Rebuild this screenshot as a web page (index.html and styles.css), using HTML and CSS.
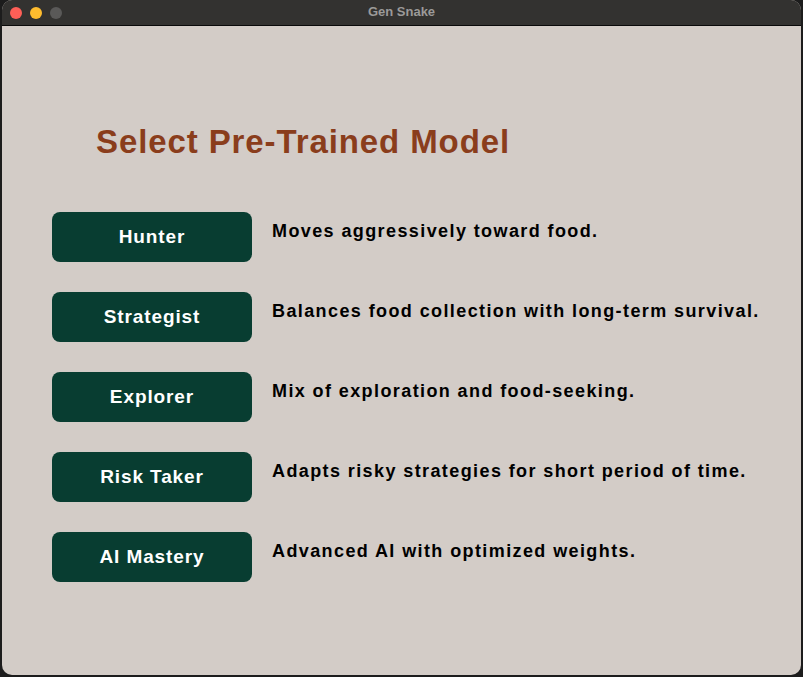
FILE: index.html
```html
<!DOCTYPE html>
<html>
<head>
<meta charset="utf-8">
<link rel="stylesheet" href="styles.css">
</head>
<body>
<div class="window">
  <div class="titlebar">
    <div class="lights">
      <span class="light red"></span>
      <span class="light yellow"></span>
      <span class="light gray"></span>
    </div>
    <div class="wtitle">Gen Snake</div>
  </div>
  <div class="content">
    <h1 class="heading">Select Pre-Trained Model</h1>
    <div class="models">
      <div class="row"><div class="btn">Hunter</div><div class="desc">Moves aggressively toward food.</div></div>
      <div class="row"><div class="btn">Strategist</div><div class="desc">Balances food collection with long-term survival.</div></div>
      <div class="row"><div class="btn">Explorer</div><div class="desc">Mix of exploration and food-seeking.</div></div>
      <div class="row"><div class="btn">Risk Taker</div><div class="desc">Adapts risky strategies for short period of time.</div></div>
      <div class="row"><div class="btn">AI Mastery</div><div class="desc">Advanced AI with optimized weights.</div></div>
    </div>
  </div>
</div>
</body>
</html>
```
FILE: styles.css
```css
html, body {
  margin: 0;
  padding: 0;
  background: #1c1c1c;
  width: 803px;
  height: 677px;
  overflow: hidden;
  font-family: "Liberation Sans", Arial, sans-serif;
}
.window {
  margin-left: 2px;
  width: 799px;
  height: 675px;
  border-radius: 10px;
  overflow: hidden;
  background: #d3ccc7;
  display: flex;
  flex-direction: column;
}
.titlebar {
  height: 25px;
  background: #333230;
  border-bottom: 1px solid #0a0a0a;
  position: relative;
  display: flex;
  align-items: center;
  flex-shrink: 0;
}
.lights {
  display: flex;
  gap: 8px;
  padding-left: 8px;
}
.light {
  width: 12px;
  height: 12px;
  border-radius: 50%;
  display: block;
}
.red { background: #fe5f57; }
.yellow { background: #febc2e; }
.gray { background: #5a5958; }
.wtitle {
  position: absolute;
  left: 0;
  right: 0;
  top: 0;
  line-height: 23px;
  text-align: center;
  color: #9b9a99;
  font-size: 13px;
  font-weight: bold;
}
.content {
  flex: 1;
  padding: 0 0 0 50px;
}
.heading {
  margin: 96px 0 0 44px;
  font-size: 33px;
  line-height: 40px;
  font-weight: bold;
  color: #8a3d1c;
  letter-spacing: 0.9px;
}
.models {
  margin-top: 50px;
  display: flex;
  flex-direction: column;
  gap: 30px;
}
.row {
  display: flex;
  align-items: flex-start;
}
.btn {
  width: 200px;
  height: 50px;
  border-radius: 8px;
  background: #083d31;
  color: #ffffff;
  font-weight: bold;
  font-size: 19px;
  letter-spacing: 0.9px;
  display: flex;
  align-items: center;
  justify-content: center;
  flex-shrink: 0;
}
.desc {
  margin-left: 20px;
  margin-top: 8px;
  font-size: 18px;
  line-height: 22px;
  font-weight: bold;
  color: #000000;
  letter-spacing: 1.4px;
}
```
